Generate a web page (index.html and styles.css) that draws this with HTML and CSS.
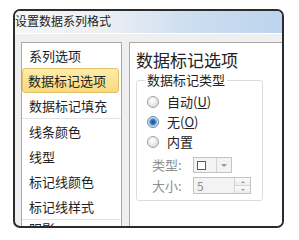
FILE: index.html
```html
<!DOCTYPE html>
<html lang="zh-CN">
<head>
<meta charset="utf-8">
<title>设置数据系列格式</title>
<link rel="stylesheet" href="styles.css">
</head>
<body>
<div class="dialog">
  <div class="titlebar">设置数据系列格式</div>
  <div class="body">
    <ul class="nav">
      <li class="item">系列选项</li>
      <li class="item selected">数据标记选项</li>
      <li class="item">数据标记填充</li>
      <li class="sep"></li>
      <li class="item">线条颜色</li>
      <li class="item">线型</li>
      <li class="item">标记线颜色</li>
      <li class="item">标记线样式</li>
      <li class="sep"></li>
      <li class="item cut">阴影</li>
    </ul>
    <div class="content">
      <div class="heading">数据标记选项</div>
      <fieldset class="group">
        <legend class="legend">数据标记类型</legend>
        <div class="opt"><span class="radio"></span><span class="opt-text">自动(<u>U</u>)</span></div>
        <div class="opt"><span class="radio checked"></span><span class="opt-text">无(<u>O</u>)</span></div>
        <div class="opt"><span class="radio"></span><span class="opt-text">内置</span></div>
        <div class="field-row first">
          <span class="flabel">类型:</span>
          <span class="combo">
            <span class="combo-val"><span class="marker"></span></span>
            <span class="combo-btn"><span class="tri-down"></span></span>
          </span>
        </div>
        <div class="field-row">
          <span class="flabel">大小:</span>
          <span class="spin">
            <span class="spin-val">5</span>
            <span class="spin-btns">
              <span class="spin-b"><span class="tri-up"></span></span>
              <span class="spin-b"><span class="tri-down small"></span></span>
            </span>
          </span>
        </div>
      </fieldset>
    </div>
  </div>
</div>
</body>
</html>
```

FILE: styles.css
```css
html, body {
  margin: 0;
  padding: 0;
  background: #ffffff;
}
body {
  font-family: "Noto Sans CJK SC", "Noto Sans", sans-serif;
  color: #222222;
}
.dialog {
  box-sizing: border-box;
  margin: 9px 0 0 13px;
  width: 271px;
  height: 219px;
  border: 2px solid #2c2c2c;
  border-radius: 7px;
  overflow: hidden;
  background: #efefef;
  display: flex;
  flex-direction: column;
}
.titlebar {
  height: 22px;
  line-height: 19px;
  font-size: 12px;
  white-space: nowrap;
  background: linear-gradient(to right, #f4f6f8 0%, #eaeff4 35%, #cddef0 65%, #bcd4ee 100%);
  border-bottom: 1px solid #ffffff;
  flex: none;
}
.body {
  flex: 1;
  display: flex;
  padding: 8px 0 0 6px;
  min-height: 0;
}
.nav {
  list-style: none;
  margin: 0;
  padding: 0;
  box-sizing: border-box;
  width: 101px;
  flex: none;
  background: #ffffff;
  border: 1px solid #a9a9a9;
  border-bottom: none;
  font-size: 13px;
}
.item {
  height: 25px;
  line-height: 25px;
  padding-left: 7px;
  white-space: nowrap;
}
.item.cut {
  line-height: 17px;
}
.item.selected {
  box-sizing: border-box;
  margin-right: 2px;
  padding-left: 5px;
  border: 1px solid #e3c066;
  border-radius: 3px;
  line-height: 23px;
  background: linear-gradient(#fdecaa, #f9d97f);
}
.sep {
  height: 1px;
  background: #e4e4e4;
}
.content {
  flex: 1;
  margin-left: 7px;
  background: #ffffff;
  border-left: 1px solid #a9a9a9;
  border-top: 1px solid #a9a9a9;
  padding-left: 6px;
}
.heading {
  margin-top: 8px;
  font-size: 17px;
  line-height: 18px;
  white-space: nowrap;
}
.group {
  margin: 3px 0 0 0;
  width: 127px;
  box-sizing: border-box;
  border: 1px solid #d6dee4;
  border-radius: 3px;
  padding: 0 0 6px 8px;
  min-width: 0;
}
.legend {
  padding: 0 2px;
  font-size: 13px;
  line-height: 16px;
}
.opt {
  height: 20px;
  display: flex;
  align-items: center;
  padding-left: 2px;
  font-size: 13px;
}
.opt:first-of-type {
  margin-top: 4px;
}
.radio {
  box-sizing: border-box;
  width: 12px;
  height: 12px;
  border-radius: 50%;
  border: 1px solid #a2a2a2;
  background: radial-gradient(circle at 40% 35%, #ffffff 0, #f2f2f2 30%, #cfcfcf 100%);
  flex: none;
}
.radio.checked {
  border-color: #5f84ab;
  background: radial-gradient(circle at 50% 50%, #1b4f8a 0, #2f6fb3 2px, #79a9db 3.5px, #dfeaf5 4.5px, #f4f8fb 100%);
}
.opt-text {
  margin-left: 8px;
  line-height: 20px;
}
.opt-text u {
  text-underline-offset: 1px;
}
.field-row {
  display: flex;
  align-items: center;
  font-size: 13px;
  color: #8e8e8e;
}
.field-row.first {
  margin-top: 5px;
}
.field-row + .field-row {
  margin-top: 4px;
}
.flabel {
  width: 41px;
  margin-left: 7px;
  line-height: 16px;
  flex: none;
}
.combo {
  box-sizing: border-box;
  display: flex;
  width: 39px;
  height: 16px;
  border: 1px solid #c3c3c3;
  background: #f3f3f3;
}
.combo-val {
  width: 19px;
  display: flex;
  align-items: center;
  padding-left: 3px;
}
.marker {
  box-sizing: border-box;
  width: 9px;
  height: 9px;
  border: 1px solid #b0353b;
  background: #ffffff;
}
.combo-btn {
  flex: 1;
  border-left: 1px solid #d4d4d4;
  display: flex;
  align-items: center;
  justify-content: center;
}
.tri-down {
  width: 0;
  height: 0;
  border-left: 3px solid transparent;
  border-right: 3px solid transparent;
  border-top: 3px solid #9a9a9a;
}
.tri-down.small {
  border-left-width: 2.5px;
  border-right-width: 2.5px;
  border-top-width: 2.5px;
}
.tri-up {
  width: 0;
  height: 0;
  border-left: 2.5px solid transparent;
  border-right: 2.5px solid transparent;
  border-bottom: 2.5px solid #9a9a9a;
}
.spin {
  box-sizing: border-box;
  display: flex;
  width: 58px;
  height: 17px;
  border: 1px solid #c3c3c3;
  background: #f3f3f3;
}
.spin-val {
  flex: 1;
  padding-left: 3px;
  line-height: 15px;
  font-size: 12px;
  color: #8e8e8e;
}
.spin-btns {
  width: 15px;
  display: flex;
  flex-direction: column;
  border-left: 1px solid #d4d4d4;
}
.spin-b {
  flex: 1;
  display: flex;
  align-items: center;
  justify-content: center;
  background: linear-gradient(#fbfbfb, #ececec);
}
.spin-b + .spin-b {
  border-top: 1px solid #d4d4d4;
}
```
